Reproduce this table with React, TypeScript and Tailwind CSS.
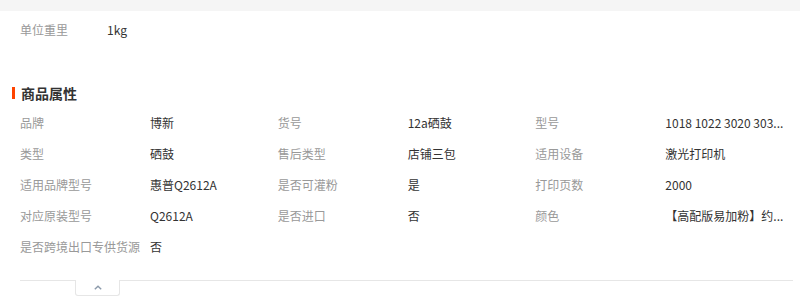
const rows: [string, string][][] = [
  [["品牌", "博新"], ["货号", "12a硒鼓"], ["型号", "1018 1022 3020 303..."]],
  [["类型", "硒鼓"], ["售后类型", "店铺三包"], ["适用设备", "激光打印机"]],
  [["适用品牌型号", "惠普Q2612A"], ["是否可灌粉", "是"], ["打印页数", "2000"]],
  [["对应原装型号", "Q2612A"], ["是否进口", "否"], ["颜色", "【高配版易加粉】约..."]],
  [["是否跨境出口专供货源", "否"]],
];

export default function App() {
  return (
    <div className="w-[800px] h-[303px] bg-white overflow-hidden font-['Noto_Sans_CJK_SC','Noto_Sans',sans-serif] text-[12px]">
      <div className="h-[11px] bg-[#f5f5f5]" />

      <div className="flex h-[20px] items-center pl-5 mt-[9px]">
        <span className="w-[87px] text-[#999]">单位重里</span>
        <span className="text-[#333]">1kg</span>
      </div>

      {/* 商品属性 */}
      <div className="flex h-[20px] items-center mt-[43px] pl-3">
        <span className="w-[3px] h-[12px] bg-[#ff4400]" />
        <span className="ml-[6px] text-[14px] font-bold text-[#333]">商品属性</span>
      </div>

      <div className="ml-5 mr-[7px] mt-[4px]">
        {rows.map((row, i) => (
          <div key={i} className="grid grid-cols-3 h-[31px] items-center">
            {row.map(([k, v]) => (
              <div key={k} className="flex whitespace-nowrap">
                <span className="w-[130px] shrink-0 text-[#999]">{k}</span>
                <span className="text-[#333]">{v}</span>
              </div>
            ))}
          </div>
        ))}
      </div>

      <div className="flex ml-5 mr-[7px] mt-[18px]">
        <div className="w-[55px] border-t border-[#e6e6e6]" />
        <div className="w-[45px] h-[16px] border-x border-b border-[#e6e6e6] rounded-b-[3px] flex justify-center pt-[5px]">
          <svg width="8" height="5" viewBox="0 0 8 5" fill="none">
            <polyline points="0.8,4.3 4,1.2 7.2,4.3" stroke="#8c9aab" strokeWidth="1.4" />
          </svg>
        </div>
        <div className="flex-1 border-t border-[#e6e6e6]" />
      </div>
    </div>
  );
}
